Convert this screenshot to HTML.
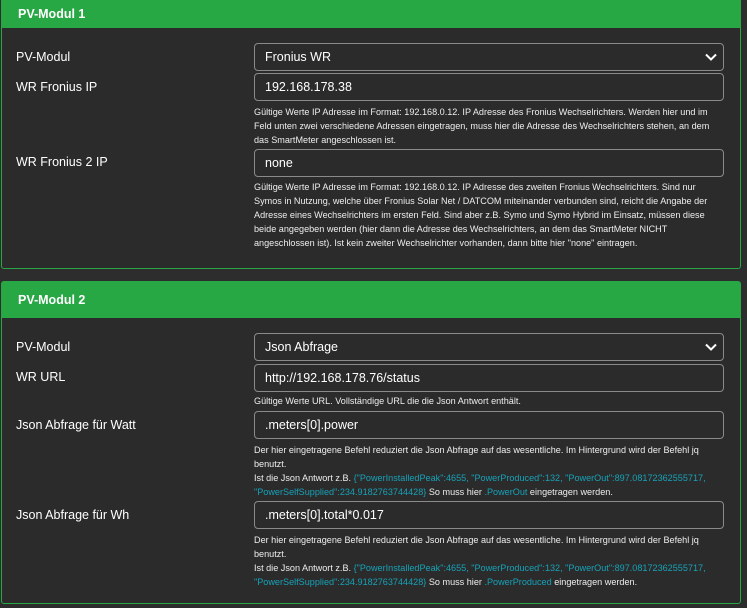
<!DOCTYPE html>
<html><head><meta charset="utf-8"><style>
body{margin:0;background:#2d2d2d;width:747px;height:608px;overflow:hidden;font-family:"Liberation Sans",sans-serif;color:#fff;position:relative}
.card{position:absolute;left:1px;width:738px;border:1px solid #28a745;background:#2b2b2b;border-radius:3px}
.hd{background:#28a745;height:36px;line-height:36px;padding-left:16px;font-weight:bold;font-size:12.5px}
.lbl{position:absolute;left:16px;font-size:12.5px;line-height:16px}
.inp{position:absolute;left:254px;border:1px solid #8a8a8a;border-radius:4px;background:#2b2b2b;font-size:12.5px;line-height:26px;padding-left:10px;box-sizing:border-box;width:470px;height:28px}
.sel svg{position:absolute;right:6px;top:9px}
.help{position:absolute;left:254px;width:458px;font-size:9.1px;line-height:14px;color:#eee}
.c{color:#17a2b8}
</style></head><body>
<div class="card" style="top:-10px;height:277px">
<div class="hd" style="height:37px;line-height:46px">PV-Modul 1</div>
</div>
<div class="lbl" style="top:49px">PV-Modul</div>
<div class="inp sel" style="top:43px">Fronius WR<svg width="12" height="8" viewBox="0 0 12 8"><path d="M1 1.5L6 6.5L11 1.5" stroke="#fff" stroke-width="2" fill="none"/></svg></div>
<div class="lbl" style="top:79px">WR Fronius IP</div>
<div class="inp" style="top:73px">192.168.178.38</div>
<div class="help" style="top:105px">Gültige Werte IP Adresse im Format: 192.168.0.12. IP Adresse des Fronius Wechselrichters. Werden hier und im Feld unten zwei verschiedene Adressen eingetragen, muss hier die Adresse des Wechselrichters stehen, an dem das SmartMeter angeschlossen ist.</div>
<div class="lbl" style="top:154px">WR Fronius 2 IP</div>
<div class="inp" style="top:149px">none</div>
<div class="help" style="top:180px">Gültige Werte IP Adresse im Format: 192.168.0.12. IP Adresse des zweiten Fronius Wechselrichters. Sind nur Symos in Nutzung, welche über Fronius Solar Net / DATCOM miteinander verbunden sind, reicht die Angabe der Adresse eines Wechselrichters im ersten Feld. Sind aber z.B. Symo und Symo Hybrid im Einsatz, müssen diese beide angegeben werden (hier dann die Adresse des Wechselrichters, an dem das SmartMeter NICHT angeschlossen ist). Ist kein zweiter Wechselrichter vorhanden, dann bitte hier "none" eintragen.</div>

<div class="card" style="top:281px;height:321px">
<div class="hd">PV-Modul 2</div>
</div>
<div class="lbl" style="top:339px">PV-Modul</div>
<div class="inp sel" style="top:333px">Json Abfrage<svg width="12" height="8" viewBox="0 0 12 8"><path d="M1 1.5L6 6.5L11 1.5" stroke="#fff" stroke-width="2" fill="none"/></svg></div>
<div class="lbl" style="top:369px">WR URL</div>
<div class="inp" style="top:364px">http://192.168.178.76/status</div>
<div class="help" style="top:394px">Gültige Werte URL. Vollständige URL die die Json Antwort enthält.</div>
<div class="lbl" style="top:417px">Json Abfrage für Watt</div>
<div class="inp" style="top:411px">.meters[0].power</div>
<div class="help" style="top:443px">Der hier eingetragene Befehl reduziert die Json Abfrage auf das wesentliche. Im Hintergrund wird der Befehl jq<br>benutzt.<br>Ist die Json Antwort z.B. <span class="c">{"PowerInstalledPeak":4655, "PowerProduced":132, "PowerOut":897.08172362555717,<br>"PowerSelfSupplied":234.9182763744428}</span> So muss hier <span class="c">.PowerOut</span> eingetragen werden.</div>
<div class="lbl" style="top:507px">Json Abfrage für Wh</div>
<div class="inp" style="top:501px">.meters[0].total*0.017</div>
<div class="help" style="top:533px">Der hier eingetragene Befehl reduziert die Json Abfrage auf das wesentliche. Im Hintergrund wird der Befehl jq<br>benutzt.<br>Ist die Json Antwort z.B. <span class="c">{"PowerInstalledPeak":4655, "PowerProduced":132, "PowerOut":897.08172362555717,<br>"PowerSelfSupplied":234.9182763744428}</span> So muss hier <span class="c">.PowerProduced</span> eingetragen werden.</div>
</body></html>
